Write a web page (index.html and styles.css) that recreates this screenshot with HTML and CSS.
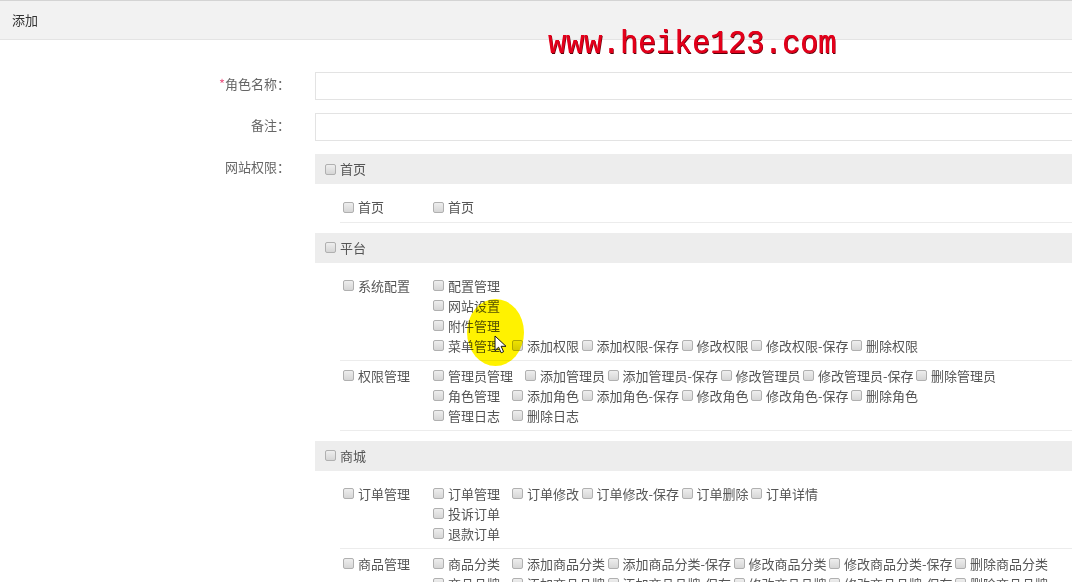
FILE: index.html
```html
<!DOCTYPE html>
<html lang="zh-CN">
<head>
<meta charset="utf-8">
<title>添加</title>
<link rel="stylesheet" href="styles.css">
</head>
<body>
<div class="page">
  <div class="topbar">添加</div>
  <form class="form">
    <div class="form-item">
      <label class="form-label"><span class="req">*</span>角色名称：</label>
      <div class="form-field"><input class="text-input" type="text"></div>
    </div>
    <div class="form-item">
      <label class="form-label">备注：</label>
      <div class="form-field"><input class="text-input" type="text"></div>
    </div>
    <div class="form-item">
      <label class="form-label perm-label">网站权限：</label>
      <div class="form-field">

        <div class="perm-section">
          <div class="perm-head"><label class="cb"><input type="checkbox">首页</label></div>
          <div class="perm-body">
            <div class="perm-row">
              <div class="perm-menu"><label class="cb"><input type="checkbox">首页</label></div>
              <div class="perm-items">
                <div class="perm-line"><label class="cb perm-page"><input type="checkbox">首页</label></div>
              </div>
            </div>
          </div>
        </div>

        <div class="perm-section">
          <div class="perm-head"><label class="cb"><input type="checkbox">平台</label></div>
          <div class="perm-body">
            <div class="perm-row">
              <div class="perm-menu"><label class="cb"><input type="checkbox">系统配置</label></div>
              <div class="perm-items">
                <div class="perm-line"><label class="cb perm-page"><input type="checkbox">配置管理</label></div>
                <div class="perm-line"><label class="cb perm-page"><input type="checkbox">网站设置</label></div>
                <div class="perm-line"><label class="cb perm-page"><input type="checkbox">附件管理</label></div>
                <div class="perm-line">
                  <label class="cb perm-page"><input type="checkbox">菜单管理</label>
                  <label class="cb perm-act"><input type="checkbox">添加权限</label>
                  <label class="cb perm-act"><input type="checkbox">添加权限-保存</label>
                  <label class="cb perm-act"><input type="checkbox">修改权限</label>
                  <label class="cb perm-act"><input type="checkbox">修改权限-保存</label>
                  <label class="cb perm-act"><input type="checkbox">删除权限</label>
                </div>
              </div>
            </div>
            <div class="perm-row">
              <div class="perm-menu"><label class="cb"><input type="checkbox">权限管理</label></div>
              <div class="perm-items">
                <div class="perm-line">
                  <label class="cb perm-page"><input type="checkbox">管理员管理</label>
                  <label class="cb perm-act"><input type="checkbox">添加管理员</label>
                  <label class="cb perm-act"><input type="checkbox">添加管理员-保存</label>
                  <label class="cb perm-act"><input type="checkbox">修改管理员</label>
                  <label class="cb perm-act"><input type="checkbox">修改管理员-保存</label>
                  <label class="cb perm-act"><input type="checkbox">删除管理员</label>
                </div>
                <div class="perm-line">
                  <label class="cb perm-page"><input type="checkbox">角色管理</label>
                  <label class="cb perm-act"><input type="checkbox">添加角色</label>
                  <label class="cb perm-act"><input type="checkbox">添加角色-保存</label>
                  <label class="cb perm-act"><input type="checkbox">修改角色</label>
                  <label class="cb perm-act"><input type="checkbox">修改角色-保存</label>
                  <label class="cb perm-act"><input type="checkbox">删除角色</label>
                </div>
                <div class="perm-line">
                  <label class="cb perm-page"><input type="checkbox">管理日志</label>
                  <label class="cb perm-act"><input type="checkbox">删除日志</label>
                </div>
              </div>
            </div>
          </div>
        </div>

        <div class="perm-section">
          <div class="perm-head"><label class="cb"><input type="checkbox">商城</label></div>
          <div class="perm-body">
            <div class="perm-row">
              <div class="perm-menu"><label class="cb"><input type="checkbox">订单管理</label></div>
              <div class="perm-items">
                <div class="perm-line">
                  <label class="cb perm-page"><input type="checkbox">订单管理</label>
                  <label class="cb perm-act"><input type="checkbox">订单修改</label>
                  <label class="cb perm-act"><input type="checkbox">订单修改-保存</label>
                  <label class="cb perm-act"><input type="checkbox">订单删除</label>
                  <label class="cb perm-act"><input type="checkbox">订单详情</label>
                </div>
                <div class="perm-line"><label class="cb perm-page"><input type="checkbox">投诉订单</label></div>
                <div class="perm-line"><label class="cb perm-page"><input type="checkbox">退款订单</label></div>
              </div>
            </div>
            <div class="perm-row">
              <div class="perm-menu"><label class="cb"><input type="checkbox">商品管理</label></div>
              <div class="perm-items">
                <div class="perm-line">
                  <label class="cb perm-page"><input type="checkbox">商品分类</label>
                  <label class="cb perm-act"><input type="checkbox">添加商品分类</label>
                  <label class="cb perm-act"><input type="checkbox">添加商品分类-保存</label>
                  <label class="cb perm-act"><input type="checkbox">修改商品分类</label>
                  <label class="cb perm-act"><input type="checkbox">修改商品分类-保存</label>
                  <label class="cb perm-act"><input type="checkbox">删除商品分类</label>
                </div>
                <div class="perm-line">
                  <label class="cb perm-page"><input type="checkbox">商品品牌</label>
                  <label class="cb perm-act"><input type="checkbox">添加商品品牌</label>
                  <label class="cb perm-act"><input type="checkbox">添加商品品牌-保存</label>
                  <label class="cb perm-act"><input type="checkbox">修改商品品牌</label>
                  <label class="cb perm-act"><input type="checkbox">修改商品品牌-保存</label>
                  <label class="cb perm-act"><input type="checkbox">删除商品品牌</label>
                </div>
              </div>
            </div>
          </div>
        </div>

      </div>
    </div>
  </form>

  <div class="watermark">www.heike123.com</div>
  <div class="click-spot"></div>
  <svg class="cursor" width="13" height="19" viewBox="0 0 13 19">
    <path d="M1 1 L1 15.5 L4.6 12.2 L7.2 17.8 L9.6 16.7 L7.1 11.3 L12 11.3 Z" fill="#fff" stroke="#111" stroke-width="1" stroke-linejoin="miter"/>
  </svg>
</div>
</body>
</html>
```

FILE: styles.css
```css
html, body {
  margin: 0;
  padding: 0;
  background: #fff;
  overflow: hidden;
}

body {
  font-family: "Noto Sans CJK SC", "Noto Sans", sans-serif;
  font-size: 13px;
  color: #555;
}

.page {
  position: relative;
  width: 1110px;
  height: 582px;
}

.topbar {
  height: 38px;
  line-height: 38px;
  padding-left: 12px;
  background: #f2f2f2;
  border-top: 1px solid #d4d4d4;
  border-bottom: 1px solid #e4e4e4;
  color: #333;
}

.form {
  padding-top: 32px;
}

.form-item {
  display: flex;
  align-items: flex-start;
  margin-bottom: 13px;
}

.form-label {
  width: 290px;
  flex: none;
  text-align: right;
  line-height: 24px;
  color: #666;
}

.perm-label {
  line-height: 26px;
}

.req {
  color: #ea5b86;
}

.form-field {
  flex: 1;
  margin-left: 25px;
}

.text-input {
  display: block;
  box-sizing: border-box;
  width: 100%;
  height: 28px;
  margin: 0;
  border: 1px solid #e3e3e3;
  background: #fff;
  outline: none;
  font: inherit;
}

.perm-head {
  height: 30px;
  line-height: 30px;
  padding-left: 10px;
  background: #ededed;
}

.perm-body {
  padding: 8px 0 10px;
}

.perm-row {
  display: flex;
  margin-left: 25px;
  padding: 5px 0 4px;
  border-bottom: 1px solid #ececec;
}

.perm-menu {
  box-sizing: border-box;
  width: 93px;
  padding-left: 3px;
  flex: none;
  line-height: 20px;
}

.perm-items {
  flex: 1;
}

.perm-line {
  display: flex;
  line-height: 20px;
  white-space: nowrap;
}

.cb {
  display: inline-flex;
  align-items: center;
}

.cb input {
  -webkit-appearance: none;
  appearance: none;
  box-sizing: border-box;
  width: 11px;
  height: 11px;
  margin: 0 4px 0 0;
  border: 1px solid #b0b0b0;
  border-radius: 2px;
  background: linear-gradient(#eeeeee, #d6d6d6);
  flex: none;
}

.perm-page {
  margin-right: 12px;
}

.perm-act {
  margin-right: 2.5px;
}

.watermark {
  position: absolute;
  left: 548px;
  top: 29px;
  font-family: "Liberation Mono", monospace;
  font-size: 30px;
  line-height: 34px;
  color: #e3001b;
  text-shadow: 0.6px 0 0 #e3001b, 1px 1px 0 #5a000a;
  transform: scaleY(1.08);
  transform-origin: left bottom;
  white-space: nowrap;
}

.click-spot {
  position: absolute;
  left: 467px;
  top: 299px;
  width: 57px;
  height: 67px;
  border-radius: 50%;
  background: #fff200;
  mix-blend-mode: multiply;
}

.cursor {
  position: absolute;
  left: 494px;
  top: 335px;
}
```
